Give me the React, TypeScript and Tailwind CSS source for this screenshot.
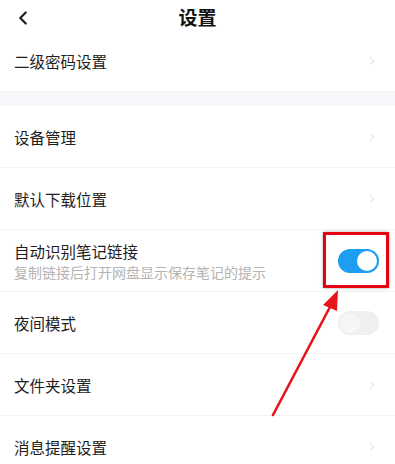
import { ChevronLeft, ChevronRight } from 'lucide-react';

const font = { fontFamily: '"Noto Sans CJK SC", "Noto Sans", sans-serif' };

function Row({ title, subtitle, right }: { title: string; subtitle?: string; right: React.ReactNode }) {
  return (
    <div className="flex h-[62px] items-center justify-between border-b border-[#f3f3f3] pl-[14px] pr-[16px]">
      <div className="flex flex-col">
        <span className="text-[15.5px] leading-[20px] text-[#1e1e1e]">{title}</span>
        {subtitle && <span className="mt-[2px] text-[14px] leading-[18px] text-[#b4b4b4]">{subtitle}</span>}
      </div>
      {right}
    </div>
  );
}

const Chevron = <ChevronRight className="h-[14px] w-[14px] text-[#cfcfcf]" strokeWidth={1.5} />;

function Toggle({ on }: { on: boolean }) {
  return (
    <div
      className={`flex h-[24px] w-[41px] items-center rounded-full px-[2px] ${
        on ? 'justify-end bg-[#1e9ef2]' : 'justify-start bg-[#efefef]'
      }`}
    >
      <div className={`h-[20px] w-[20px] rounded-full ${on ? 'bg-white' : 'bg-[#f6f6f6]'}`} />
    </div>
  );
}

export default function App() {
  return (
    <div className="relative h-[464px] w-[395px] overflow-hidden bg-white" style={font}>
      <div className="relative flex h-[30px] items-center justify-center">
        <ChevronLeft className="absolute left-[12px] top-[7px] h-[22px] w-[22px] text-[#1e1e1e]" strokeWidth={2.4} />
        <span className="mt-[4px] text-[19px] font-bold text-[#111]">设置</span>
      </div>
      <Row title="二级密码设置" right={Chevron} />
      <div className="h-[14px] bg-[#f6f6fb]" />
      <Row title="设备管理" right={Chevron} />
      <Row title="默认下载位置" right={Chevron} />
      <div className="relative">
        <Row title="自动识别笔记链接" subtitle="复制链接后打开网盘显示保存笔记的提示" right={<Toggle on />} />
        <div className="absolute left-[323px] top-[2px] h-[56px] w-[66px] border-[3px] border-[#e60012] shadow-[0_0_3px_rgba(0,0,0,0.35)]" />
      </div>
      <Row title="夜间模式" right={<Toggle on={false} />} />
      <Row title="文件夹设置" right={Chevron} />
      <Row title="消息提醒设置" right={Chevron} />
      <svg className="absolute left-0 top-0" width="395" height="464" viewBox="0 0 395 464">
        <line x1="273" y1="415" x2="331" y2="305" stroke="#e8141c" strokeWidth="2.6" strokeLinecap="round" />
        <polygon points="338,290 323,305 337,311" fill="#e8141c" />
      </svg>
    </div>
  );
}
